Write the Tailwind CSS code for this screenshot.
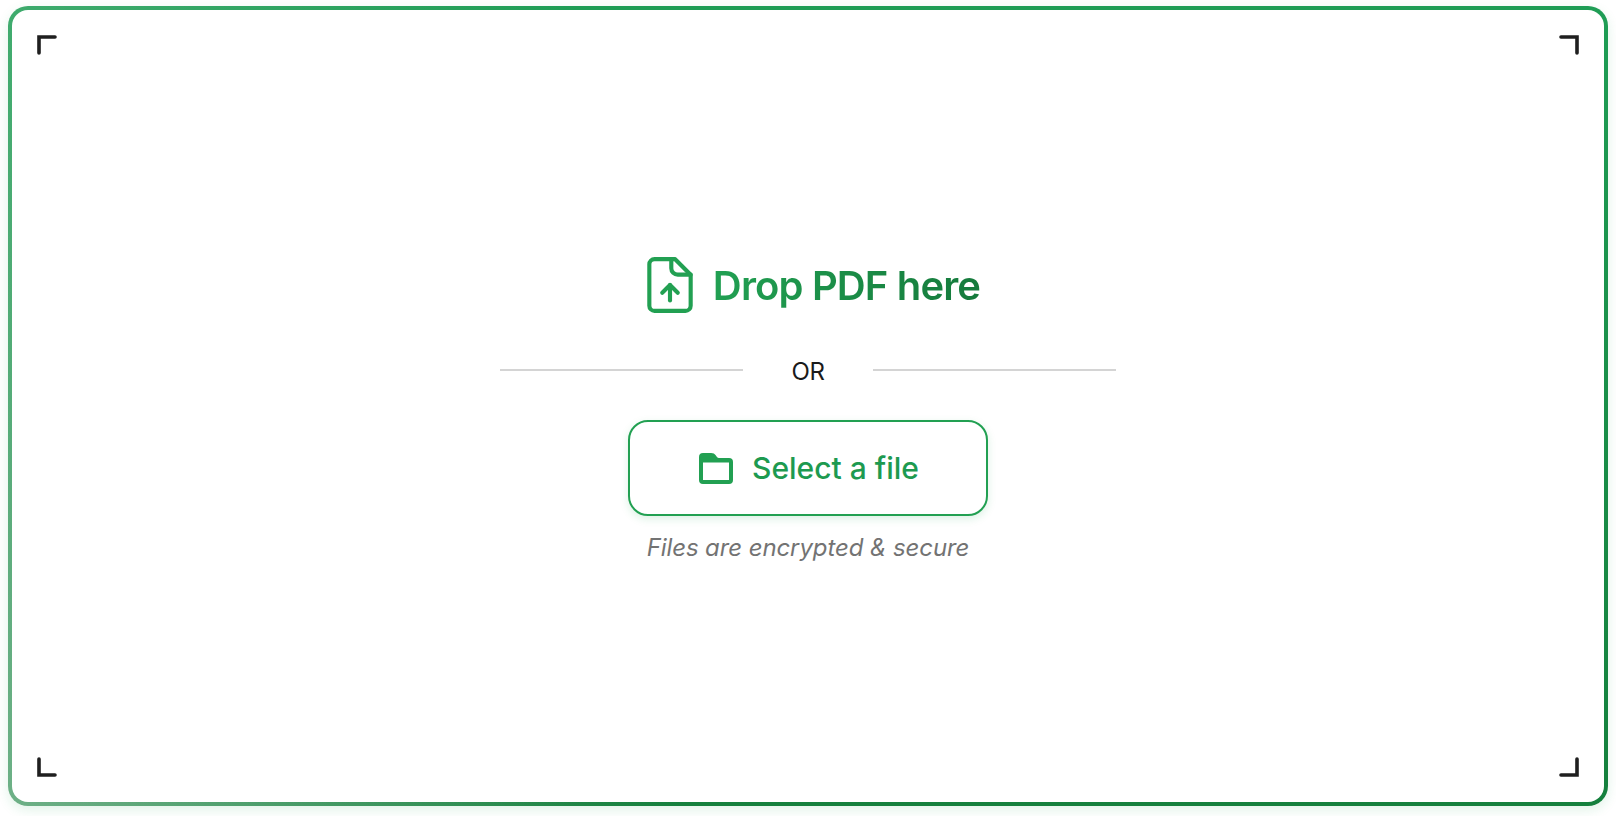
<!DOCTYPE html>
<html lang="en">
<head>
  <meta charset="UTF-8">
  <meta name="viewport" content="width=device-width, initial-scale=1.0">
  <title>Drop PDF</title>
  <script src="https://cdn.jsdelivr.net/npm/@tailwindcss/browser@4"></script>
</head>
<body class="bg-white font-['Inter',sans-serif]">
  <div class="h-screen w-full px-2 pt-[6px] pb-[10px]">
    <!-- Gradient border -->
    <div class="h-full rounded-[20px] p-[4px] shadow-[0_4px_12px_rgba(22,163,74,0.13)] bg-[linear-gradient(to_right,rgba(255,255,255,0.14),transparent_36%),linear-gradient(230deg,transparent_70%,rgba(255,255,255,0.28)_100%),linear-gradient(to_bottom,#1f9d55,#15803d)]">
      <div class="relative h-full rounded-[16px] bg-white flex flex-col items-center justify-center pt-[6px]">
        <!-- Corner marks -->
        <svg xmlns="http://www.w3.org/2000/svg" class="absolute left-[25px] top-[25px] w-5 h-5 text-[#1f1f1f]" viewBox="0 0 20 20" fill="none" stroke="currentColor" stroke-width="3.6" stroke-linecap="round"><path d="M2 18V2H18" /></svg>
        <svg xmlns="http://www.w3.org/2000/svg" class="absolute right-[25px] top-[25px] w-5 h-5 text-[#1f1f1f]" viewBox="0 0 20 20" fill="none" stroke="currentColor" stroke-width="3.6" stroke-linecap="round"><path d="M2 2H18V18" /></svg>
        <svg xmlns="http://www.w3.org/2000/svg" class="absolute left-[25px] bottom-[25px] w-5 h-5 text-[#1f1f1f]" viewBox="0 0 20 20" fill="none" stroke="currentColor" stroke-width="3.6" stroke-linecap="round"><path d="M2 2V18H18" /></svg>
        <svg xmlns="http://www.w3.org/2000/svg" class="absolute right-[25px] bottom-[25px] w-5 h-5 text-[#1f1f1f]" viewBox="0 0 20 20" fill="none" stroke="currentColor" stroke-width="3.6" stroke-linecap="round"><path d="M2 18H18V2" /></svg>

        <!-- Heading -->
        <div class="flex items-center gap-3 ml-[3px]">
          <svg xmlns="http://www.w3.org/2000/svg" class="w-[62px] h-[62px] text-[#22a052]" fill="none" viewBox="0 0 24 24" stroke="currentColor" stroke-width="1.6" stroke-linecap="round" stroke-linejoin="round">
            <path d="M14 2H6a2 2 0 0 0-2 2v16a2 2 0 0 0 2 2h12a2 2 0 0 0 2-2V8Z" />
            <path d="M12.5 2v3.500a2.500 2.500 0 0 0 2.500 2.500h5" />
            <path d="M12 12v6" />
            <path d="m15 15-3-3-3 3" />
          </svg>
          <h1 class="mt-[2px] text-[40px] leading-[48px] font-semibold tracking-[-0.85px] text-transparent bg-clip-text bg-gradient-to-r from-[#21a052] to-[#157a3c]">Drop PDF here</h1>
        </div>

        <!-- Divider -->
        <div class="mt-[40px] w-[616px] flex items-center">
          <div class="flex-1 h-[2px] bg-[#d4d4d4] mb-[4px]"></div>
          <span class="px-[49px] text-[24px] leading-[32px] text-[#1a1a1a] tracking-[-0.5px]">OR</span>
          <div class="flex-1 h-[2px] bg-[#d4d4d4] mb-[4px]"></div>
        </div>

        <!-- Button -->
        <button class="mt-[32px] w-[360px] h-[96px] pl-[2px] rounded-[20px] border-2 border-[#22a052] bg-white shadow-[0_3px_8px_rgba(22,163,74,0.15)] flex items-center justify-center gap-[19px] text-[30px] font-medium text-[#1d9a50]">
          <svg xmlns="http://www.w3.org/2000/svg" class="w-[34px] h-[31px] text-[#22a052]" viewBox="0 0 34 31" fill="currentColor">
            <path fill-rule="evenodd" d="M4 0h8c2.500 0 3.500 .8 4.500 2 1 1.500 1.800 3 3.500 3H30a4 4 0 0 1 4 4V27a4 4 0 0 1-4 4H4a4 4 0 0 1-4-4V4a4 4 0 0 1 4-4Zm0 9.500V27h26V9.500Z" />
          </svg>
          <span>Select a file</span>
        </button>

        <p class="mt-[16px] text-[24px] leading-[32px] italic tracking-[-0.1px] text-[#737373]">Files are encrypted &amp; secure</p>
      </div>
    </div>
  </div>
</body>
</html>
